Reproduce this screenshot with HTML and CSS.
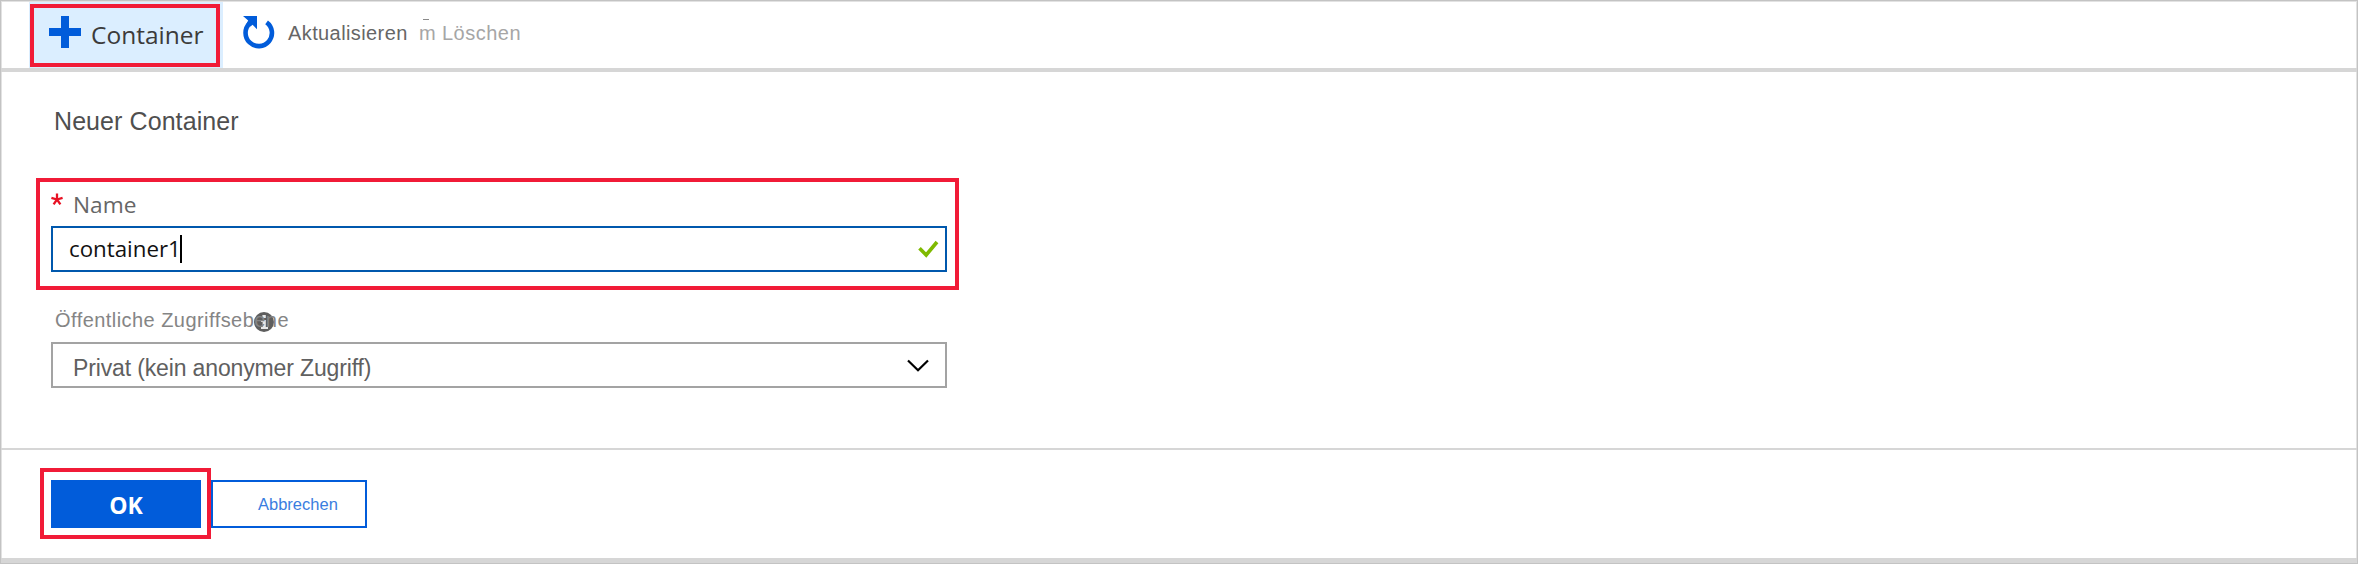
FILE: index.html
```html
<!DOCTYPE html>
<html lang="de">
<head>
<meta charset="utf-8">
<title>Neuer Container</title>
<link rel="stylesheet" href="styles.css">
</head>
<body>
<div class="blade">
  <header class="toolbar">
    <button class="tool tool-add">
      <svg class="icon-plus" viewBox="0 0 32 32"><path d="M12 0h8v12h12v8H20v12h-8V20H0v-8h12z"/></svg>
      <span class="add-label">Container</span>
    </button>
    <button class="tool tool-refresh">
      <svg class="icon-refresh" viewBox="0 0 32 32"><path class="ring" d="M23.6 6.3A13.2 13.2 0 1 1 6.8 7.2"/><path class="head" d="M0 0H14V13.3L9.6 8.8 7.4 10.6 3.4 7.8 5.2 4.6z"/></svg>
      <span class="refresh-label">Aktualisieren</span>
    </button>
    <button class="tool tool-delete"><span class="trash">m</span><span class="delete-label">Löschen</span></button>
  </header>
  <main class="form">
    <h1 class="title"><span>Neuer Container</span></h1>
    <section class="field field-name">
      <label class="name-label">
        <svg class="icon-star" viewBox="0 0 12 13"><path d="M6 6.5V.4M6 6.5 .4 4.8M6 6.5 11.6 4.8M6 6.5 2.6 11.4M6 6.5 9.4 11.4"/></svg>
        <span class="name-text">Name</span>
      </label>
      <div class="box box-input">
        <span class="value">container1</span><i class="caret"></i>
        <svg class="icon-check" viewBox="0 0 21 18"><path d="M1.5 8.2 8.2 15 19 2"/></svg>
      </div>
    </section>
    <section class="field field-access">
      <label class="access-label">
        <span class="access-text">Öffentliche Zugriffsebene</span>
        <svg class="icon-info" viewBox="0 0 20 20"><circle cx="10" cy="10" r="10"/><path d="M8.4 3h3.4v3H8.4zM7 8h4.8v7H14v2H7v-2h1.6v-5H7z"/></svg>
      </label>
      <div class="box box-select">
        <span class="choice">Privat (kein anonymer Zugriff)</span>
        <svg class="icon-chevron" viewBox="0 0 22 13"><path d="M1 1.5 11 11.2 21 1.5"/></svg>
      </div>
    </section>
  </main>
  <footer class="actions">
    <div class="ok-wrap"><button class="ok"><span>OK</span></button></div>
    <button class="cancel"><span>Abbrechen</span></button>
  </footer>
</div>
</body>
</html>
```
FILE: styles.css
```css
*, *::before, *::after { box-sizing: border-box; }
body { margin: 0; background: #fff; font-family: "Liberation Sans", Arial, sans-serif; }
button { margin: 0; padding: 0; border: 0; background: none; font: inherit; color: inherit; text-align: left; }
svg { display: block; flex: none; overflow: visible; }
span { white-space: nowrap; }

.blade {
  display: flex;
  flex-direction: column;
  height: 564px;
  border: 1px solid #c3c3c3;
  box-shadow: inset 0 0 0 1px #e2e2e2;
  padding: 1px 0 0;
}
.toolbar { display: flex; height: 70px; padding-left: 28px; border-bottom: 4px solid #d6d6d6; }
.tool { display: flex; align-items: flex-start; }
.tool-add { position: relative; width: 194px; padding: 14px 0 0 20px; background: #dbeeff; }
.tool-add::after { content: ""; position: absolute; left: 1px; top: 2px; width: 190px; height: 63px; border: 4px solid #f11b37; }
.icon-plus { width: 32px; height: 32px; fill: #015cda; }
.add-label { margin: 3px 0 0 10px; font: 24.5px/32px "Open Sans", sans-serif; color: #3b3b3b; }
.tool-refresh { width: 188px; padding: 14px 0 0 20px; }
.icon-refresh { width: 32px; height: 32px; }
.ring { fill: none; stroke: #015cda; stroke-width: 4.6; }
.head { fill: #015cda; }
.refresh-label { margin-left: 13px; font-size: 20px; letter-spacing: .4px; line-height: 34px; color: #666; }
.tool-delete { padding: 14px 0 0 8px; font-size: 20px; letter-spacing: .5px; line-height: 34px; color: #a6a6a6; }
.trash { position: relative; width: 23px; }
.trash::before { content: ""; position: absolute; left: 4px; top: 3px; width: 6px; height: 1px; background: #8a8a8a; }

.form { height: 378px; padding: 31px 0 0 50px; border-bottom: 2px solid #d6d6d6; }
.title { margin: 0 0 0 3px; height: 88px; font-size: 25px; letter-spacing: .08px; line-height: 37px; font-weight: 400; color: #4f4f4f; }
.field { width: 896px; }
.field-name { position: relative; height: 112px; }
.field-name::after { content: ""; position: absolute; left: -15px; top: -13px; width: 923px; height: 112px; border: 4px solid #f11b37; }
.name-label { display: flex; height: 35px; padding-top: 2px; }
.icon-star { width: 12px; height: 13px; fill: none; stroke: #e81123; stroke-width: 2.3; }
.name-text { margin-left: 10px; font: 22.7px/24px "Open Sans", sans-serif; color: #666; }
.box { display: flex; align-items: center; height: 46px; border: 2px solid #a3a3a3; }
.box-input { border-color: #0058ad; padding: 0 6px 0 16px; }
.value { width: 111px; margin-top: -1px; font: 22.3px/32px "Open Sans", sans-serif; color: #111; }
.caret { width: 2px; height: 28px; background: #000; }
.icon-check { width: 21px; height: 18px; margin-left: auto; fill: none; stroke: #7fba00; stroke-width: 3.6; }
.access-label { display: flex; position: relative; height: 39px; padding-left: 4px; color: #858585; }
.access-text { position: relative; z-index: 1; font-size: 20px; letter-spacing: .45px; line-height: 34px; }
.icon-info { position: absolute; left: 203px; top: 9px; width: 20px; height: 20px; fill: #5e5e5e; }
.icon-info path { fill: #e8e8e8; }
.box-select { padding: 0 16px 0 20px; }
.choice { margin-top: 5px; font-size: 23px; letter-spacing: -.14px; line-height: 28px; color: #606060; }
.icon-chevron { width: 22px; height: 13px; margin-left: auto; fill: none; stroke: #000; stroke-width: 2.2; }

.actions { display: flex; flex: 1; align-items: flex-start; padding: 30px 0 0 50px; border-bottom: 5px solid #d6d6d6; }
.ok-wrap { position: relative; width: 160px; }
.ok-wrap::after { content: ""; position: absolute; left: -11px; top: -12px; width: 171px; height: 71px; border: 4px solid #f11b37; }
.ok { display: flex; justify-content: center; width: 150px; height: 48px; padding-top: 9px; background: #015cda; color: #fff; font: 700 23px/32px "Open Sans", sans-serif; }
.cancel { width: 156px; height: 48px; padding: 0 0 0 45px; border: 2px solid #015cda; font-size: 16.5px; line-height: 44px; color: #3a7de0; }
```
